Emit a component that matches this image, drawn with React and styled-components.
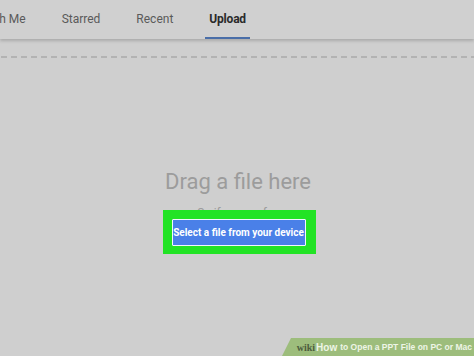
import React from "react";
import styled, { createGlobalStyle } from "styled-components";

const Global = createGlobalStyle`
  html, body {
    margin: 0;
    padding: 0;
    background: #cfcfcf;
    font-family: Roboto, "Liberation Sans", sans-serif;
    overflow: hidden;
  }
`;

const Page = styled.div`
  width: 474px;
  height: 356px;
  display: flex;
  flex-direction: column;
  position: relative;
  overflow: hidden;
  background: #cfcfcf;
`;

const Header = styled.div`
  height: 39px;
  display: flex;
  align-items: stretch;
  background: #d0d0d0;
  box-shadow: 0 2px 3px rgba(0, 0, 0, 0.18);
  overflow: hidden;
`;

const Tabs = styled.div`
  display: flex;
  gap: 28px;
  margin-left: -61px;
`;

const Tab = styled.div`
  display: flex;
  align-items: center;
  padding: 0 4px;
  font-size: 12px;
  color: ${(p) => (p.active ? "#2a2a2a" : "#5a5a5a")};
  font-weight: ${(p) => (p.active ? 700 : 400)};
  letter-spacing: ${(p) => (p.active ? "-0.2px" : "0")};
  border-bottom: 2px solid ${(p) => (p.active ? "#4a6ea8" : "transparent")};
  padding-top: 1px;
  white-space: nowrap;
`;

const Dashed = styled.div`
  margin-top: 17px;
  height: 2px;
  background-image: linear-gradient(to right, #b3b3b3 0 6px, transparent 6px 10px);
  background-size: 10px 2px;
  background-position: 1px 0;
`;

const Drop = styled.div`
  flex: 1;
  display: flex;
  flex-direction: column;
  align-items: center;
  padding-top: 111px;
`;

const DragText = styled.div`
  font-size: 22px;
  color: #9c9c9c;
  line-height: 26px;
  margin-left: 2px;
`;

const OrText = styled.div`
  font-size: 12px;
  color: #9c9c9c;
  margin-top: 11px;
  line-height: 14px;
`;

const Highlight = styled.div`
  margin-top: -10px;
  margin-left: 4px;
  background: #22e325;
  padding: 9px 10px 8px 9px;
`;

const SelectButton = styled.div`
  width: 132px;
  height: 25px;
  border: 1px solid #f2f6ff;
  background: #4a80e8;
  color: #ffffff;
  font-size: 10px;
  font-weight: 700;
  display: flex;
  align-items: center;
  justify-content: center;
  border-radius: 1px;
`;

const Watermark = styled.div`
  position: absolute;
  right: 0;
  bottom: 0;
  width: 192px;
  height: 18px;
  background: #9dbd7c;
  clip-path: polygon(9px 0, 100% 0, 100% 100%, 0 100%);
  display: flex;
  align-items: center;
  justify-content: flex-end;
  padding-right: 2px;
  box-sizing: border-box;
  font-size: 8.5px;
  font-weight: 700;
  color: #eef5e6;
  font-family: "Liberation Sans", Arial, sans-serif;
  white-space: nowrap;
`;

const Wiki = styled.span`
  font-family: "Liberation Serif", serif;
  font-weight: 700;
  color: #4c5c3c;
  font-size: 10px;
  margin-right: 1px;
`;

const How = styled.span`
  font-size: 10px;
  margin-right: 3px;
`;

export default function App() {
  return (
    <Page>
      <Global />
      <Header>
        <Tabs>
          <Tab>Shared with Me</Tab>
          <Tab>Starred</Tab>
          <Tab>Recent</Tab>
          <Tab active>Upload</Tab>
        </Tabs>
      </Header>
      <Dashed />
      <Drop>
        <DragText>Drag a file here</DragText>
        <OrText>Or, if you prefer</OrText>
        <Highlight>
          <SelectButton>Select a file from your device</SelectButton>
        </Highlight>
      </Drop>
      <Watermark>
        <Wiki>wiki</Wiki>
        <How>How</How>to Open a PPT File on PC or Mac
      </Watermark>
    </Page>
  );
}
